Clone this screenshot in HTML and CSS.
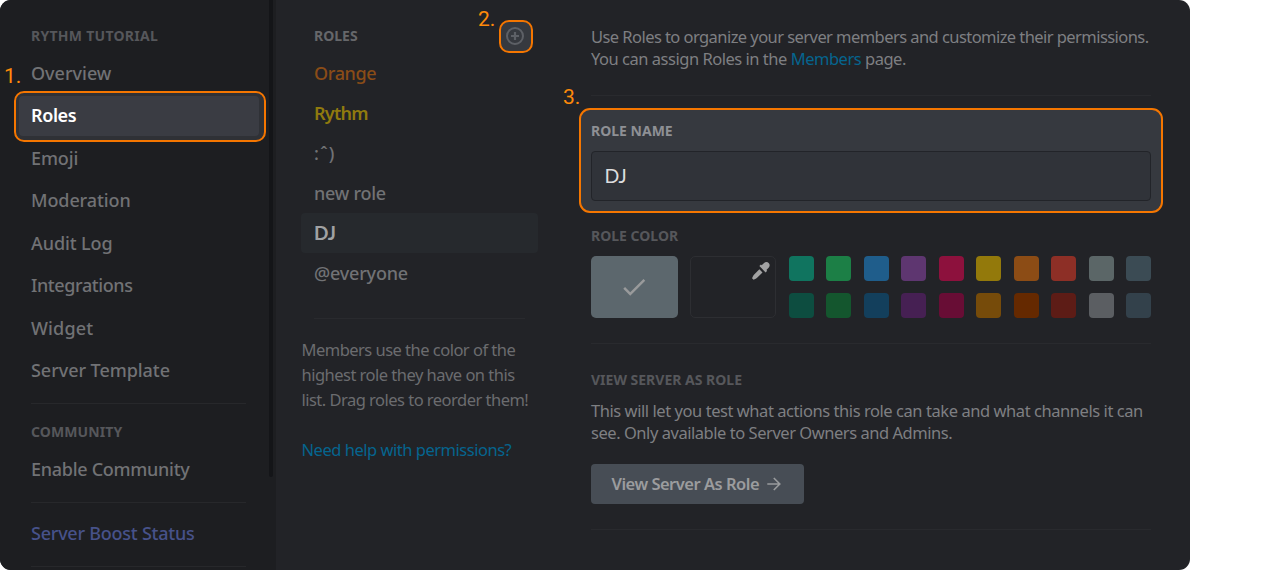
FILE: index.html
```html
<!DOCTYPE html>
<html lang="en">
<head>
<meta charset="utf-8">
<title>Server Settings - Roles</title>
<link rel="stylesheet" href="styles.css">
</head>
<body>
<div class="window">
  <nav class="sidebar">
    <h2 class="label nav-label server-name">RYTHM TUTORIAL</h2>
    <ul class="nav">
      <li><span class="t-overview">Overview</span></li>
      <li class="active"><span class="t-roles">Roles</span></li>
      <li><span class="t-emoji">Emoji</span></li>
      <li><span class="t-moderation">Moderation</span></li>
      <li><span class="t-audit">Audit Log</span></li>
      <li><span class="t-integrations">Integrations</span></li>
      <li><span class="t-widget">Widget</span></li>
      <li><span class="t-template">Server Template</span></li>
    </ul>
    <hr class="rule">
    <h2 class="label nav-label community">COMMUNITY</h2>
    <ul class="nav">
      <li><span class="t-enable">Enable Community</span></li>
    </ul>
    <hr class="rule rule-mid">
    <ul class="nav">
      <li class="boost"><span class="t-boost">Server Boost Status</span></li>
    </ul>
    <hr class="rule rule-end">
    <div class="scrollbar"></div>
  </nav>
  <section class="roles">
    <h2 class="label roles-label">ROLES</h2>
    <ul class="role-list">
      <li class="orange"><span class="t-orange">Orange</span></li>
      <li class="yellow"><span class="t-rythm">Rythm</span></li>
      <li><span class="t-face">:ˆ)</span></li>
      <li><span class="t-new">new role</span></li>
      <li class="selected"><span class="t-dj">DJ</span></li>
      <li><span class="t-everyone">@everyone</span></li>
    </ul>
    <hr class="rule roles-rule">
    <p class="hint"><span>Members use the color of the</span><br><span>highest role they have on this</span><br><span>list. Drag roles to reorder them!</span></p>
    <a class="help">Need help with permissions?</a>
  </section>
  <main class="main">
    <p class="copy intro"><span class="c1">Use Roles to organize your server members and customize their permissions.</span><br><span class="c2">You can assign Roles in the <a class="link">Members</a> page.</span></p>
    <hr class="rule">
    <div class="name-field">
      <h3 class="label l-name">ROLE NAME</h3>
      <div class="input">DJ</div>
    </div>
    <h3 class="label l-color">ROLE COLOR</h3>
    <div class="colors">
      <div class="default-color">
        <svg width="30" height="30" viewBox="0 0 24 24"><path fill="#999a9b" d="M8.99991 16.17L4.82991 12L3.40991 13.41L8.99991 19L20.9999 7L19.5899 5.59L8.99991 16.17Z"/></svg>
      </div>
      <div class="custom-color">
        <svg width="18" height="18" viewBox="0 0 16 16"><path fill="#a2a2a3" d="M14.994 1.006C13.858-.257 11.904-.3 10.72.89L8.637 2.975l-.696-.697-1.387 1.388 5.557 5.557 1.387-1.388-.697-.697 1.964-1.964c1.13-1.13 1.3-2.985.23-4.168zm-13.25 10.25c-.225.224-.408.48-.55.764L.02 14.37l1.39 1.39 2.35-1.174c.283-.14.54-.33.765-.55l4.808-4.808-2.776-2.776-4.813 4.803z"/></svg>
      </div>
      <div class="swatches">
        <i class="s1"></i><i class="s2"></i><i class="s3"></i><i class="s4"></i><i class="s5"></i><i class="s6"></i><i class="s7"></i><i class="s8"></i><i class="s9"></i><i class="s10"></i>
        <i class="s11"></i><i class="s12"></i><i class="s13"></i><i class="s14"></i><i class="s15"></i><i class="s16"></i><i class="s17"></i><i class="s18"></i><i class="s19"></i><i class="s20"></i>
      </div>
    </div>
    <hr class="rule">
    <h3 class="label l-view">VIEW SERVER AS ROLE</h3>
    <p class="copy view"><span class="c3">This will let you test what actions this role can take and what channels it can</span><br><span class="c4">see. Only available to Server Owners and Admins.</span></p>
    <div class="button"><span class="t-button">View Server As Role</span>
      <svg width="14" height="14" viewBox="0 0 14 14" fill="none" stroke="#999b9d" stroke-width="1.6"><path d="M.3 7H12.6M6.8 1L12.8 7L6.8 13"/></svg>
    </div>
    <hr class="rule">
  </main>

  <div class="mark mark-1"></div>
  <div class="mark mark-2">
    <svg width="20" height="20" viewBox="0 0 20 20" fill="none" stroke="#5d6066" stroke-width="2"><circle cx="10" cy="10" r="8"/><path stroke-width="2.2" d="M10 6V14M6 10H14"/></svg>
  </div>
  <span class="step step-1">1.</span>
  <span class="step step-2">2.</span>
  <span class="step step-3">3.</span>
</div>
</body>
</html>
```

FILE: styles.css
```css
* { box-sizing: border-box; margin: 0; padding: 0; }
body { background: #fff; font-family: "Noto Sans", "Open Sans", sans-serif; }
ul { list-style: none; }
.window { position: relative; display: flex; width: 1190px; height: 570px; background: #222327; border-radius: 11px; overflow: hidden; }
.label { font-size: 14px; font-weight: 700; line-height: 20px; color: #56575b; white-space: nowrap; }
.rule { border: 0; height: 1px; background: #292a2e; }

.sidebar { position: relative; width: 276px; padding: 26px 17px 0 19px; background: #1d1e21; flex: none; }
.nav-label { margin-left: 12px; }
.server-name { letter-spacing: .27px; }
.nav { display: flex; flex-direction: column; gap: 2.5px; font-size: 18px; font-weight: 500; line-height: 38px; color: #717275; white-space: nowrap; margin-top: 7.5px; }
.nav li { height: 40px; padding-left: 12px; border-radius: 4px; }
.nav .active { position: relative; z-index: 2; color: #fff; }
.t-roles { font-weight: 600; letter-spacing: -.4px; }
.sidebar .rule { margin: 12px 13px 0 12px; background: #27282b; }
.community { margin-top: 18px; letter-spacing: .1px; }
.sidebar .rule-mid { margin-top: 12.5px; }
.rule-mid + .nav { margin-top: 11px; }
.nav .boost { color: #47528a; }
.t-emoji, .t-moderation, .t-audit { letter-spacing: -.1px; }
.t-integrations { letter-spacing: -.4px; }
.t-widget { letter-spacing: .15px; }
.t-template { letter-spacing: -.05px; }
.t-enable { letter-spacing: -.28px; }
.t-boost { letter-spacing: -.24px; }
.scrollbar { position: absolute; right: 3px; top: -4px; width: 4px; height: 481px; background: #141518; border-radius: 2px; }

.roles { width: 262px; padding: 26px 0 0 25px; flex: none; }
.roles-label { margin-left: 13px; color: #66676a; }
.role-list { margin-top: 7px; font-size: 18px; font-weight: 500; line-height: 40px; color: #717275; white-space: nowrap; }
.role-list li { height: 40px; padding-left: 13px; border-radius: 4px; }
.role-list .orange { color: #8a4c17; }
.role-list .yellow { color: #907a0e; }
.role-list .selected { background: #26292d; color: #a0a1a3; }
.t-orange { letter-spacing: -.35px; }
.t-rythm { letter-spacing: -.75px; font-weight: 600; }
.t-face { letter-spacing: 1px; }
.t-new { letter-spacing: -.25px; }
.t-dj { font-family: Lato, sans-serif; font-size: 19px; font-weight: 700; }
.t-everyone { letter-spacing: -.2px; }
.roles-rule { margin: 25px 13px 0 13px; }
.hint { margin-top: 18px; padding-left: .5px; font-size: 16.5px; letter-spacing: -.52px; line-height: 25px; color: #6b6c6f; white-space: nowrap; }
.help { display: block; margin-top: 25px; padding-left: .5px; font-size: 16.5px; letter-spacing: -.48px; line-height: 25px; color: #05658f; white-space: nowrap; }

.main { margin-left: 53px; width: 560px; padding-top: 26px; flex: none; }
.copy { font-size: 16.5px; letter-spacing: -.56px; line-height: 22px; color: #7e7f82; white-space: nowrap; }
.c2 { letter-spacing: -.48px; }
.c3 { letter-spacing: -.44px; }
.c4 { letter-spacing: -.46px; }
.link { color: #05658f; }
.intro { margin-bottom: 25px; }
.name-field { margin: 12px -12px 13px; height: 105px; padding: 11px 10px 0; border: 2px solid #f57600; border-radius: 11px; background: #36393f; }
.l-name { line-height: 20px; color: #8e9095; }
.input { margin-top: 10px; height: 50px; padding-left: 12.5px; border: 1px solid #222429; border-radius: 4px; background: #303339; color: #dcddde; font-family: Lato, sans-serif; font-size: 19.5px; line-height: 48px; }
.colors { display: flex; margin: 10px 0 25px; height: 62px; }
.default-color { width: 87px; border-radius: 5px; background: #5c676d; display: flex; align-items: center; justify-content: center; padding-right: 2px; }
.custom-color { width: 86px; margin-left: 12px; border: 1px solid #2d2e32; border-radius: 5px; display: flex; justify-content: flex-end; padding: 5px 5px 0 0; }
.swatches { margin-left: 13px; flex: 1; display: grid; grid-template-columns: repeat(10, 25px); grid-auto-rows: 25px; justify-content: space-between; align-content: space-between; }
.swatches i { border-radius: 4px; }
.s1 { background: #10745f; } .s2 { background: #1c7f46; } .s3 { background: #1f5d8b; } .s4 { background: #5e3670; } .s5 { background: #8d113d; }
.s6 { background: #93790b; } .s7 { background: #8c4c15; } .s8 { background: #8d2f26; } .s9 { background: #5b6667; } .s10 { background: #3b4b54; }
.s11 { background: #0d4d40; } .s12 { background: #14562e; } .s13 { background: #133f5c; } .s14 { background: #462053; } .s15 { background: #680d35; }
.s16 { background: #764b0a; } .s17 { background: #652900; } .s18 { background: #5d1c16; } .s19 { background: #5b5e62; } .s20 { background: #33414b; }
.l-view { margin-top: 26px; margin-bottom: 10px; }
.button { display: flex; align-items: center; gap: 8px; margin: 20px 0 25px; width: 213px; height: 40px; padding-left: 20.5px; border-radius: 4px; background: #474d55; color: #9b9c9e; font-size: 16.5px; font-weight: 600; letter-spacing: -.5px; white-space: nowrap; }
.t-button { line-height: 20px; padding-bottom: 1px; }

.mark { position: absolute; border: 2px solid #f57600; background: #36393f; }
.mark-1 { left: 14px; top: 91px; width: 252px; height: 51px; border-radius: 10px; background: #2f3136; z-index: 1; }
.mark-1::after { content: ""; position: absolute; left: 3px; top: 3px; width: 240px; height: 40px; border-radius: 4px; background: #3a3c43; }
.mark-2 { left: 499px; top: 20px; width: 34px; height: 33px; border-radius: 10px; display: flex; align-items: center; justify-content: center; padding: 0 2px 1px 0; }
.step { position: absolute; font-family: Roboto, sans-serif; font-size: 21px; line-height: 24px; color: #ff8a0a; }
.step-1 { left: 4px; top: 64px; }
.step-2 { left: 478px; top: 7px; }
.step-3 { left: 563px; top: 85px; }
```
